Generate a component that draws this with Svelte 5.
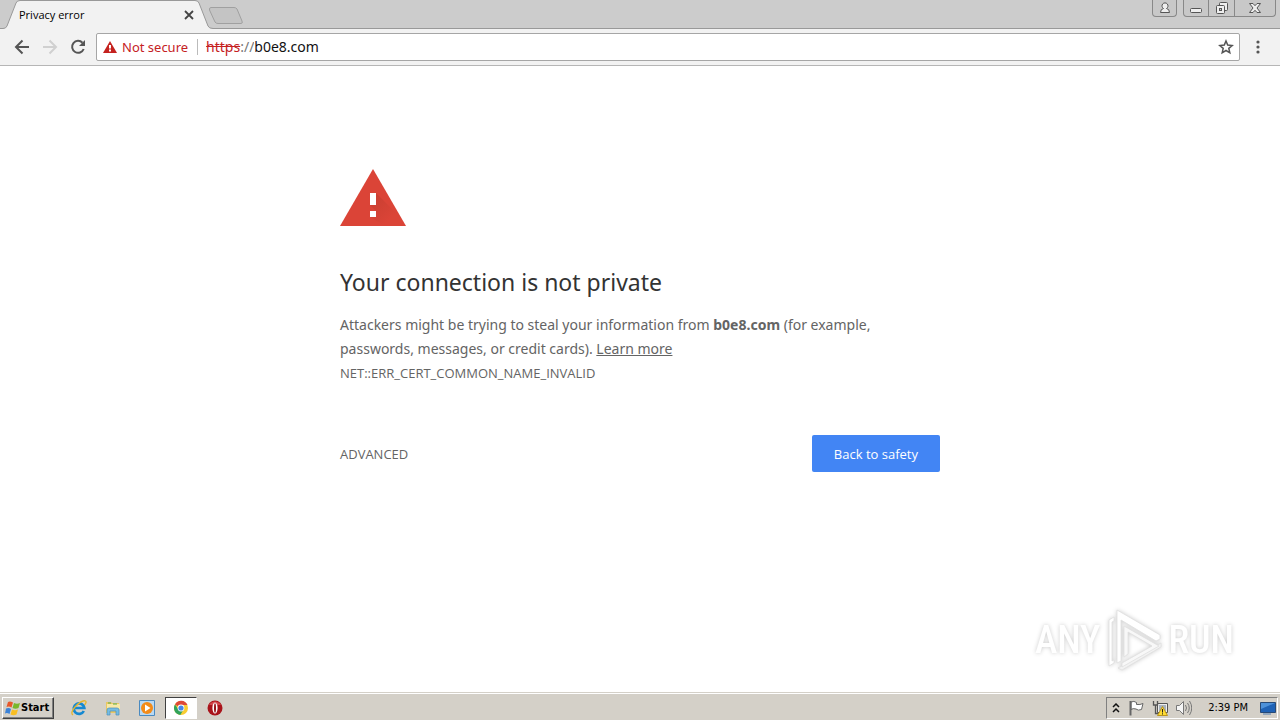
<script>
    const host = 'b0e8.com';
    let address = $state(host);
</script>

<svelte:head>
    <title>Privacy error</title>
</svelte:head>

<div class="screen">
    <header class="titlebar">
        <div class="tab">
            <svg class="tab__shape" viewBox="0 0 213 29" width="213" height="29" aria-hidden="true">
                <path d="M0 28.5H3Q6 28.5 7 26L16 3Q17 .5 20 .5H195Q198 .5 199 3L208 26Q209 28.5 213 28.5V29H0Z" fill="#f2f2f2" />
                <path d="M0 28.5H3Q6 28.5 7 26L16 3Q17 .5 20 .5H195Q198 .5 199 3L208 26Q209 28.5 213 28.5" fill="none" stroke="#999" />
            </svg>
            <span class="tab__title">Privacy error</span>
            <button class="tab__close" aria-label="Close tab">
                <svg viewBox="0 0 10 10" width="10" height="10"><path d="M1 1L9 9M9 1L1 9" stroke="#444" stroke-width="1.8" /></svg>
            </button>
        </div>
        <button class="new-tab" aria-label="New tab">
            <svg viewBox="0 0 36 18" width="36" height="18"><path d="M3 .5H26Q28 .5 29 2L34 14Q35 16.5 33 16.5H10Q8 16.5 7 15L1.500 3Q1 .5 3 .5Z" fill="#c4c4c4" stroke="#a0a0a0" /></svg>
        </button>
        <div class="window-buttons">
            <button class="window-button window-button--user" aria-label="User">
                <svg viewBox="0 0 12 12" width="12" height="12" fill="#eee" stroke="#555"><path d="M4.500 6.500A3 3 0 1 1 7.500 6.500Q10.500 7 10.500 10.500H1.500Q1.500 7 4.500 6.500Z" /></svg>
            </button>
            <div class="window-buttons__group">
                <button class="window-button window-button--min" aria-label="Minimize">
                    <svg viewBox="0 0 14 14" width="14" height="14"><rect x="1.500" y="7.500" width="11" height="4" rx="1" fill="#eee" stroke="#555" /></svg>
                </button>
                <button class="window-button window-button--restore" aria-label="Restore">
                    <svg viewBox="0 0 14 14" width="14" height="14" fill="#eee" stroke="#555"><rect x="4.500" y="1.500" width="8" height="8" rx="1" /><rect x="1.500" y="4.500" width="8" height="8" rx="1" /><rect x="4.500" y="7.500" width="2" height="2" fill="#ccc" /></svg>
                </button>
                <button class="window-button window-button--close" aria-label="Close">
                    <svg viewBox="0 0 14 14" width="14" height="14"><path d="M1.500 2.500H5L7 4.700L9 2.500H12.500L9 7L12.500 11.500H9L7 9.300L5 11.500H1.500L5 7Z" fill="#eee" stroke="#555" /></svg>
                </button>
            </div>
        </div>
    </header>

    <nav class="toolbar">
        <button class="nav-button" aria-label="Back">
            <svg viewBox="0 0 16 16" width="16" height="16" fill="none" stroke="#555" stroke-width="2"><path d="M15 8H2.500M8.500 1.500L2 8L8.500 14.500" /></svg>
        </button>
        <button class="nav-button" aria-label="Forward" disabled>
            <svg viewBox="0 0 16 16" width="16" height="16" fill="none" stroke="#d0d0d0" stroke-width="2"><path d="M1 8H13.500M7.500 1.500L14 8L7.500 14.500" /></svg>
        </button>
        <button class="nav-button" aria-label="Reload">
            <svg viewBox="0 0 16 16" width="16" height="16"><path d="M12.500 3.700A6 6 0 1 0 13.700 10" fill="none" stroke="#555" stroke-width="2" /><path d="M15 1V7H9Z" fill="#555" /></svg>
        </button>
        <div class="omnibox">
            <svg class="omnibox__warning" viewBox="0 0 14 12" width="14" height="12"><path d="M7 0L14 12H0Z" fill="#c5221f" /><path d="M6 4H8V7.500H6ZM6 8.500H8V10.500H6Z" fill="#fff" /></svg>
            <span class="omnibox__status">Not secure</span>
            <label class="omnibox__scheme" for="address"><s>https</s>://</label>
            <input class="omnibox__input" id="address" type="text" bind:value={address} spellcheck="false" />
            <button class="omnibox__star" aria-label="Bookmark this page">
                <svg viewBox="0 0 16 16" width="16" height="16"><path d="M8 2L9.700 6.100L14.200 6.500L10.800 9.400L11.800 13.800L8 11.500L4.200 13.800L5.200 9.400L1.800 6.500L6.300 6.100Z" fill="none" stroke="#555" stroke-width="1.500" /></svg>
            </button>
        </div>
        <button class="menu-button" aria-label="Menu">
            <svg viewBox="0 0 4 14" width="4" height="14" fill="#555"><circle cx="2" cy="2" r="1.600" /><circle cx="2" cy="7" r="1.600" /><circle cx="2" cy="12" r="1.600" /></svg>
        </button>
    </nav>

    <main class="page">
        <section class="warning">
            <svg class="warning__icon" viewBox="0 0 66 57" width="66" height="57">
                <defs>
                    <linearGradient id="shade" x1="0" y1="0" x2="1" y2="1">
                        <stop offset="0" stop-color="#b93a2c" />
                        <stop offset=".7" stop-color="#db4437" />
                    </linearGradient>
                </defs>
                <path d="M33 0L66 57H0Z" fill="#db4437" />
                <path d="M36 24L55 43L63 57H45L30 48H36V42L30 36H36Z" fill="url(#shade)" opacity=".6" />
                <path d="M30 24H36V36H30ZM30 42H36V48H30Z" fill="#fff" />
            </svg>
            <h1 class="warning__title">Your connection is not private</h1>
            <p class="warning__text">
                Attackers might be trying to steal your information from <strong>{host}</strong> (for example, passwords, messages, or credit cards). <a href="#learn-more">Learn more</a>
            </p>
            <p class="warning__code">NET::ERR_CERT_COMMON_NAME_INVALID</p>
            <div class="warning__actions">
                <button class="warning__advanced">ADVANCED</button>
                <button class="warning__back">Back to safety</button>
            </div>
        </section>

        <div class="watermark">
            <span>ANY</span>
            <svg viewBox="0 0 60 64" width="60" height="64" fill="#fff" stroke="#e0e0e0" stroke-width=".8" stroke-linejoin="round">
                <path d="M10 9L5 12V58L10 55V52L8 53V14L10 13Z" />
                <path d="M14 60L18 62L57 39V35L18 58Z" fill="#f2f2f2" />
                <path d="M13 2L56 27V31L52 33L17 12V53L13 55Z" />
                <path d="M20 18L55 38L18 59V55L48 38L24 24V46L20 49Z" fill="#f8f8f8" />
            </svg>
            <span>RUN</span>
        </div>
    </main>

    <footer class="taskbar">
        <button class="start">
            <svg viewBox="0 0 16 16" width="16" height="16">
                <path d="M3 2Q5 1 8 2.500L6.500 7.500Q4 6 1.500 7Z" fill="#e8582a" />
                <path d="M9 3Q12 4.500 15 3L13.500 8Q10.500 9.500 7.500 8Z" fill="#79b72b" />
                <path d="M1 8.500Q4 7.500 6 9L4.500 14Q2 12.500 0 13.500Z" fill="#3c83d8" />
                <path d="M7 9.500Q10 11 13 9.500L11.500 14.500Q8.500 16 5.500 14.500Z" fill="#f9be22" />
            </svg>
            Start
        </button>
        <div class="quick-launch">
            <button class="task" aria-label="Internet Explorer">
                <svg viewBox="0 0 16 16" width="16" height="16" fill="none"><path d="M12.800 11A5.300 5.300 0 1 1 13.300 8H3.500" stroke="#1689d1" stroke-width="2.700" /><path d="M2 15Q-1 13 4 7Q11-.5 14.500 1Q16 2 13.500 5" stroke="#e5b52d" stroke-width="1.300" /></svg>
            </button>
            <button class="task" aria-label="Windows Explorer">
                <svg viewBox="0 0 16 16" width="16" height="16"><path d="M1 2H6L7 3H14V13H1Z" fill="#e9c763" /><path d="M2 4H15V9H2Z" fill="#f8e9a7" /><path d="M3 3H6M8 4H12" stroke="#58ad4f" /><path d="M2 15V10Q2 8 4 8H12Q14 8 14 10V15H11V11H5V15Z" fill="#75bce2" stroke="#4a91bd" stroke-width=".7" /></svg>
            </button>
            <button class="task" aria-label="Windows Media Player">
                <svg viewBox="0 0 16 16" width="16" height="16"><path d="M.5.5H15.500V15.500H.5Z" fill="#b9d9f3" stroke="#4a8ac0" /><circle cx="8" cy="8" r="6" fill="#f38b18" /><path d="M6 4.500L11.500 8L6 11.500Z" fill="#fff" /></svg>
            </button>
            <button class="task task--active" aria-label="Google Chrome">
                <svg viewBox="0 0 16 16" width="16" height="16"><circle cx="8" cy="8" r="7" fill="#f8cc32" /><path d="M8 8L2 4.400A7 7 0 0 1 14.500 5H8Z" fill="#de4938" /><path d="M2 4.400A7 7 0 0 0 7.300 15L10.600 9.500L8 8L5.400 9.500Z" fill="#30a35b" /><circle cx="8" cy="8" r="3.400" fill="#fff" /><circle cx="8" cy="8" r="2.600" fill="#4687e8" /></svg>
            </button>
            <button class="task" aria-label="Opera">
                <svg viewBox="0 0 16 16" width="16" height="16"><circle cx="8" cy="8" r="7.500" fill="#a9141b" /><path d="M2 5A7 7 0 0 1 14 5" fill="#d3474c" /><ellipse cx="8" cy="8" rx="2.600" ry="5.500" fill="#fff" /><ellipse cx="8" cy="8" rx="1" ry="4.700" fill="#941319" /></svg>
            </button>
        </div>
        <div class="tray">
            <button class="tray__button" aria-label="Show hidden icons">
                <svg viewBox="0 0 8 10" width="8" height="10" fill="none" stroke="#111" stroke-width="1.500"><path d="M1 4L4 1L7 4M1 9L4 6L7 9" /></svg>
            </button>
            <button class="tray__button" aria-label="Action Center">
                <svg viewBox="0 0 16 16" width="16" height="16"><path d="M3 2Q6 .5 8.500 2.500V4.500Q12 5 15 3.500L13.500 9.500Q10 11 8 9Q5 8 3 9.500Z" fill="#fff" stroke="#666" /><path d="M2.500 1V15.500" stroke="#666" stroke-width="2" /></svg>
            </button>
            <button class="tray__button" aria-label="Network">
                <svg viewBox="0 0 16 16" width="16" height="16"><path d="M5.500 3.500H15.500V12.500H5.500Z" fill="#eee" stroke="#555" /><path d="M7 5H14V11H7Z" fill="#a8b2bd" /><path d="M1.500 1V5H5.500V1M3.500 5V13.500H7" fill="none" stroke="#555" stroke-width="1.300" /><path d="M10.500 6.500L15.500 15.500H5.500Z" fill="#ffdc32" stroke="#b9941d" /><path d="M10.500 9V12.500M10.500 13.300V14.500" stroke="#222" /></svg>
            </button>
            <button class="tray__button" aria-label="Volume">
                <svg viewBox="0 0 16 16" width="16" height="16" fill="none" stroke="#777"><path d="M.5 5.500H3.500L7.500 1.500V14.500L3.500 10.500H.5Z" fill="#f5f5f5" /><path d="M9.500 5Q11.500 8 9.500 11M11.500 3Q15 8 11.500 13M13.500 1Q18 8 13.500 15" /></svg>
            </button>
            <time class="tray__clock">2:39 PM</time>
            <button class="tray__button" aria-label="Show desktop">
                <svg viewBox="0 0 16 16" width="16" height="16"><path d="M.5 2.500H15.500V12.500H.5Z" fill="#1f62b5" stroke="#284a76" /><path d="M1 3H15L1 9Z" fill="#4d91d9" /><path d="M3 14H11" stroke="#91a6bd" stroke-width="2" /></svg>
            </button>
        </div>
    </footer>
</div>

<style>
    :global(body) {
        background: #fff;
    }

    .screen {
        display: flex;
        flex-direction: column;
        min-height: 100vh;
        font-family: "Noto Sans", "Open Sans", sans-serif;
    }

    .screen * {
        box-sizing: border-box;
    }

    svg {
        display: block;
        flex: none;
    }

    button {
        display: flex;
        align-items: center;
        justify-content: center;
        padding: 0;
        border: 0;
        background: none;
        font-family: inherit;
    }

    .titlebar {
        display: flex;
        align-items: flex-start;
        height: 29px;
        background: #ccc;
        box-shadow: inset 0 -1px #999;
    }

    .tab {
        position: relative;
        display: flex;
        align-items: center;
        justify-content: space-between;
        width: 208px;
        height: 29px;
        padding: 0 14px 0 19px;
    }

    .tab__shape {
        position: absolute;
        top: 0;
        left: 0;
    }

    .tab__title,
    .tab__close {
        position: relative;
    }

    .tab__title {
        font-family: "Open Sans", sans-serif;
        font-size: 11px;
        color: #000;
    }

    .new-tab {
        padding-top: 7px;
    }

    .window-buttons {
        display: flex;
        gap: 6px;
        margin-left: auto;
        padding-right: 4px;
    }

    .window-buttons__group {
        display: flex;
    }

    .window-button {
        height: 17px;
        border: 1px solid #888;
        border-top: 0;
        background: #c8c8c8;
    }

    .window-button--user {
        width: 25px;
        border-radius: 0 0 4px 4px;
    }

    .window-button--min {
        width: 26px;
        border-radius: 0 0 0 4px;
    }

    .window-button--restore {
        width: 25px;
        border-right: 0;
        border-left: 0;
    }

    .window-button--close {
        width: 42px;
        border-radius: 0 0 4px;
    }

    .toolbar {
        display: flex;
        align-items: center;
        gap: 12px;
        height: 37px;
        padding: 0 20px 0 14px;
        border-bottom: 1px solid #b6b6b6;
        background: #f2f2f2;
    }

    .nav-button {
        width: 16px;
        height: 28px;
    }

    .omnibox {
        display: flex;
        flex: 1;
        align-items: center;
        height: 28px;
        margin-right: 4px;
        margin-left: -2px;
        padding: 0 5px 0 6px;
        border: 1px solid #a6a6a6;
        border-radius: 2px;
        background: #fff;
        font-size: 14px;
        line-height: 16px;
    }

    .omnibox__warning {
        margin-right: 5px;
    }

    .omnibox__status {
        padding-right: 9px;
        border-right: 1px solid #bbb;
        color: #c5221f;
        font-size: 13px;
    }

    .omnibox__scheme {
        padding-left: 8px;
        color: #777;
    }

    .omnibox__scheme s {
        color: #c5221f;
    }

    .omnibox__input {
        flex: 1;
        min-width: 0;
        padding: 0;
        border: 0;
        outline: 0;
        color: #111;
        font: inherit;
    }

    .menu-button {
        width: 4px;
    }

    .page {
        position: relative;
        flex: 1;
        padding: 103px 24px 24px;
    }

    .warning {
        max-width: 600px;
        margin: 0 auto;
        color: #646464;
        font-size: 14px;
        line-height: 24px;
    }

    .warning__title {
        margin: 40px 0 15px;
        color: #333;
        font-size: 23px;
        font-weight: 400;
        line-height: 32px;
    }

    .warning__text,
    .warning__code {
        margin: 0;
    }

    .warning__text a {
        color: inherit;
    }

    .warning__code {
        font-family: "Open Sans", sans-serif;
        font-size: 13px;
    }

    .warning__actions {
        display: flex;
        align-items: center;
        justify-content: space-between;
        margin-top: 50px;
    }

    .warning__advanced,
    .warning__back {
        height: 37px;
        font-family: "Open Sans", sans-serif;
        font-size: 13px;
    }

    .warning__advanced {
        color: #646464;
    }

    .warning__back {
        padding: 0 22px;
        border-radius: 2px;
        background: #4285f4;
        color: #fff;
    }

    .watermark {
        position: absolute;
        right: 46px;
        bottom: 20px;
        display: flex;
        align-items: center;
        gap: 4px;
        color: #fff;
        font-family: "Roboto Condensed", "Liberation Sans Narrow", "Liberation Sans", sans-serif;
        font-size: 38px;
        font-weight: 500;
        filter: drop-shadow(0 0 2px #ccc);
    }

    .taskbar {
        display: flex;
        align-items: center;
        height: 28px;
        padding: 2px 2px 0;
        border-top: 1px solid #d4d0c8;
        background: #d4d0c8;
        box-shadow: inset 0 1px #fff;
    }

    .start {
        height: 22px;
        padding: 0 4px 0 2px;
        border: 1px solid;
        border-color: #fff #404040 #404040 #fff;
        box-shadow: inset -1px -1px #808080;
        color: #000;
        font-family: "DejaVu Sans Condensed", sans-serif;
        font-size: 11px;
        font-weight: 700;
    }

    .quick-launch {
        display: flex;
        margin-left: 9px;
        gap: 2px;
    }

    .task {
        width: 32px;
        height: 22px;
    }

    .task--active {
        border: 1px solid;
        border-color: #404040 #fff #fff #404040;
        background: #fff;
    }

    .tray {
        display: flex;
        align-items: center;
        gap: 8px;
        height: 22px;
        margin-left: auto;
        padding: 0 1px 0 5px;
        border: 1px solid;
        border-color: #808080 #fff #fff #808080;
    }

    .tray__clock {
        padding: 0 4px 0 8px;
        color: #000;
        font-family: "DejaVu Sans Condensed", sans-serif;
        font-size: 11px;
    }
</style>
